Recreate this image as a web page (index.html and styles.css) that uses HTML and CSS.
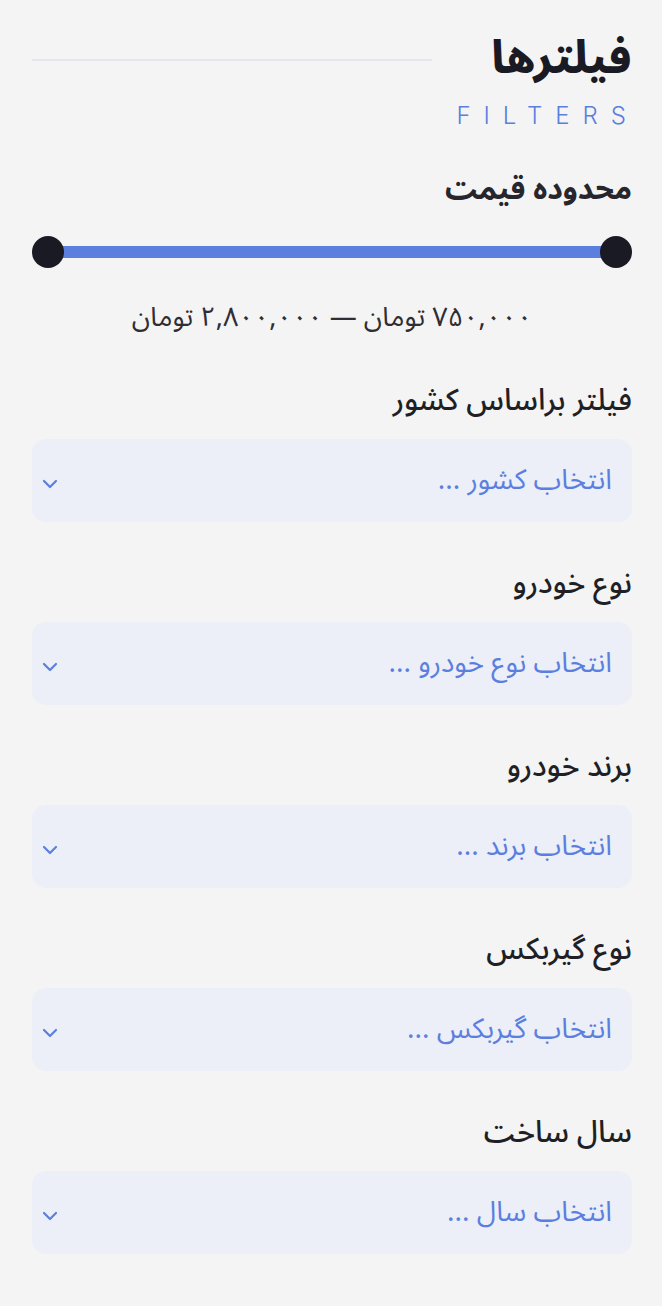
FILE: index.html
```html
<!DOCTYPE html>
<html lang="fa" dir="rtl">
<head>
<meta charset="utf-8">
<link rel="stylesheet" href="styles.css">
</head>
<body>
<aside class="panel">
  <header class="head">
    <div class="title-block">
      <h1 class="title">فیلترها</h1>
      <div class="subtitle">FILTERS</div>
    </div>
    <div class="rule"></div>
  </header>

  <section class="price">
    <h2 class="price-title">محدوده قیمت</h2>
    <div class="slider">
      <span class="thumb"></span>
      <span class="track"></span>
      <span class="thumb"></span>
    </div>
    <div class="price-text">۷۵۰,۰۰۰ تومان — ۲,۸۰۰,۰۰۰ تومان</div>
  </section>

  <div class="field">
    <label class="label">فیلتر براساس کشور</label>
    <div class="select"><span class="ph">انتخاب کشور ...</span><svg class="chev" viewBox="0 0 16 10" width="16" height="10"><path d="M2 2l6 6 6-6" fill="none" stroke="#5b7fdf" stroke-width="2.2" stroke-linecap="round" stroke-linejoin="round"/></svg></div>
  </div>
  <div class="field">
    <label class="label">نوع خودرو</label>
    <div class="select"><span class="ph">انتخاب نوع خودرو ...</span><svg class="chev" viewBox="0 0 16 10" width="16" height="10"><path d="M2 2l6 6 6-6" fill="none" stroke="#5b7fdf" stroke-width="2.2" stroke-linecap="round" stroke-linejoin="round"/></svg></div>
  </div>
  <div class="field">
    <label class="label">برند خودرو</label>
    <div class="select"><span class="ph">انتخاب برند ...</span><svg class="chev" viewBox="0 0 16 10" width="16" height="10"><path d="M2 2l6 6 6-6" fill="none" stroke="#5b7fdf" stroke-width="2.2" stroke-linecap="round" stroke-linejoin="round"/></svg></div>
  </div>
  <div class="field">
    <label class="label">نوع گیربکس</label>
    <div class="select"><span class="ph">انتخاب گیربکس ...</span><svg class="chev" viewBox="0 0 16 10" width="16" height="10"><path d="M2 2l6 6 6-6" fill="none" stroke="#5b7fdf" stroke-width="2.2" stroke-linecap="round" stroke-linejoin="round"/></svg></div>
  </div>
  <div class="field">
    <label class="label">سال ساخت</label>
    <div class="select"><span class="ph">انتخاب سال ...</span><svg class="chev" viewBox="0 0 16 10" width="16" height="10"><path d="M2 2l6 6 6-6" fill="none" stroke="#5b7fdf" stroke-width="2.2" stroke-linecap="round" stroke-linejoin="round"/></svg></div>
  </div>
</aside>
</body>
</html>
```
FILE: styles.css
```css
html, body {
  margin: 0;
  padding: 0;
  background: #f4f4f5;
}
body {
  font-family: "Noto Sans Arabic", "DejaVu Sans", "Noto Sans", sans-serif;
  color: #1f1f26;
}
.panel {
  padding: 32px 30px 40px 32px;
  display: flex;
  flex-direction: column;
}
.head {
  display: flex;
  align-items: flex-start;
  gap: 24px;
}
.title-block {
  display: flex;
  flex-direction: column;
  align-items: flex-start;
  position: relative;
}
.title-block::before {
  content: "";
  position: absolute;
  inset: -8px -30px -10px -80px;
  background: radial-gradient(ellipse at center, rgba(236,238,246,0.85) 35%, rgba(244,244,245,0) 72%);
  z-index: -1;
}
.title {
  margin: 0;
  font-size: 45px;
  font-weight: 800;
  line-height: 54px;
  color: #1a1a24;
}
.subtitle {
  font-family: "Inter", "Liberation Sans", sans-serif;
  font-weight: 300;
  font-size: 24px;
  letter-spacing: 13px;
  margin-right: -7px;
  color: #5b7fdf;
  direction: ltr;
  line-height: 28px;
  margin-top: 16px;
}
.rule {
  flex: 1;
  height: 2px;
  background: #e6e6ec;
  margin-top: 27px;
}
.price {
  margin-top: 40px;
  display: flex;
  flex-direction: column;
}
.price-title {
  margin: 0;
  font-size: 30px;
  font-weight: 700;
  line-height: 40px;
  color: #26262c;
}
.slider {
  margin-top: 26px;
  display: flex;
  align-items: center;
}
.thumb {
  width: 32px;
  height: 32px;
  border-radius: 50%;
  background: #1a1a24;
  flex: none;
  position: relative;
  z-index: 1;
}
.track {
  flex: 1;
  height: 12px;
  background: #5b7fdf;
  margin: 0 -2px;
}
.price-text {
  text-align: center;
  font-size: 27px;
  line-height: 36px;
  margin-top: 32px;
  color: #2e2e34;
}
.field {
  display: flex;
  flex-direction: column;
  margin-top: 45px;
}
.field + .field {
  margin-top: 42px;
}
.label {
  font-size: 30px;
  font-weight: 500;
  line-height: 40px;
  color: #1f1f26;
}
.select {
  margin-top: 18px;
  height: 83px;
  border-radius: 14px;
  background: #eceef8;
  display: flex;
  align-items: center;
  justify-content: space-between;
  padding: 0 20px 0 10px;
}
.ph {
  font-size: 28px;
  color: #5b7fdf;
}
.chev {
  display: block;
  margin-top: 6px;
}
```
